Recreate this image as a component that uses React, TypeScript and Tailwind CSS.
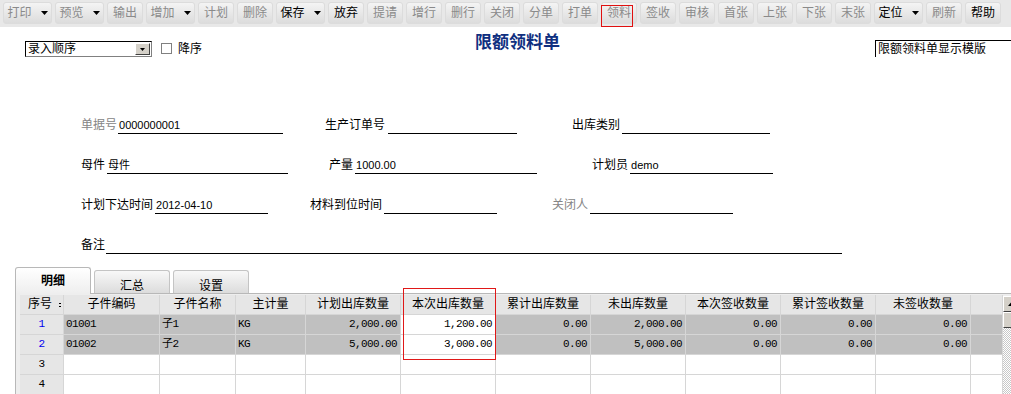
import React from "react";

type Tool = { label: string; drop?: boolean; on?: boolean; mark?: boolean };

const tools: Tool[] = [
  { label: "打印", drop: true },
  { label: "预览", drop: true },
  { label: "输出" },
  { label: "增加", drop: true },
  { label: "计划" },
  { label: "删除" },
  { label: "保存", drop: true, on: true },
  { label: "放弃", on: true },
  { label: "提请" },
  { label: "增行" },
  { label: "删行" },
  { label: "关闭" },
  { label: "分单" },
  { label: "打单" },
  { label: "领料", mark: true },
  { label: "签收" },
  { label: "审核" },
  { label: "首张" },
  { label: "上张" },
  { label: "下张" },
  { label: "末张" },
  { label: "定位", drop: true, on: true },
  { label: "刷新" },
  { label: "帮助", on: true },
];

const Tri = () => (
  <svg width="7" height="4" viewBox="0 0 7 4">
    <polygon points="0,0 7,0 3.5,4" fill="#000" />
  </svg>
);

const Toolbar = () => (
  <div className="flex h-[27px] gap-[3px] bg-[#e8e8e8] pl-[3px] pt-[2px]">
    {tools.map((t) => (
      <div
        key={t.label}
        className={`relative flex h-[22px] shrink-0 items-center justify-center gap-[9px] rounded-[3px] border border-[#dcdcdc] bg-linear-to-b from-[#f4f4f4] to-[#dcdcdc] text-[12px] leading-none ${
          t.drop ? "w-[49px]" : "w-[36px]"
        } ${t.on ? "text-black" : "text-[#8a8a8a]"}`}
      >
        <span>{t.label}</span>
        {t.drop && <Tri />}
        {t.mark && (
          <span className="absolute left-[-1px] top-[2px] h-[22px] w-[32px] border border-[#e01010]" />
        )}
      </div>
    ))}
  </div>
);

type F = { label: string; ml: string; gap: string; w: string; value?: string; gray?: boolean };

const rows: F[][] = [
  [
    { label: "单据号", ml: "ml-0", gap: "ml-[1px]", w: "w-[165px]", value: "0000000001", gray: true },
    { label: "生产订单号", ml: "ml-[42px]", gap: "ml-[3px]", w: "w-[129px]" },
    { label: "出库类别", ml: "ml-[55px]", gap: "ml-[2px]", w: "w-[148px]" },
  ],
  [
    { label: "母件", ml: "ml-0", gap: "ml-[2px]", w: "w-[181px]", value: "母件" },
    { label: "产量", ml: "ml-[41px]", gap: "ml-[2px]", w: "w-[182px]", value: "1000.00" },
    { label: "计划员", ml: "ml-[55px]", gap: "ml-[2px]", w: "w-[143px]", value: "demo" },
  ],
  [
    { label: "计划下达时间", ml: "ml-0", gap: "ml-[2px]", w: "w-[113px]", value: "2012-04-10" },
    { label: "材料到位时间", ml: "ml-[42px]", gap: "ml-[2px]", w: "w-[113px]" },
    { label: "关闭人", ml: "ml-[55px]", gap: "ml-[2px]", w: "w-[143px]", gray: true },
  ],
  [{ label: "备注", ml: "ml-0", gap: "ml-[1px]", w: "w-[736px]" }],
];

const Form = () => (
  <div>
    {rows.map((r, i) => (
      <div key={i} className="flex h-[40px] items-end pl-[81px]">
        {r.map((f) => (
          <div key={f.label} className={`flex items-end ${f.ml}`}>
            <span className={`pb-[2px] text-[12px] leading-[14px] ${f.gray ? "text-[#858585]" : "text-black"}`}>
              {f.label}
            </span>
            <div className={`${f.gap} ${f.w} h-[16px] border-b border-black pl-[1px] text-[11px] leading-[14px]`}>
              {f.value}
            </div>
          </div>
        ))}
      </div>
    ))}
  </div>
);

type Col = { title: string; w: string; num?: boolean; white?: boolean };

const cols: Col[] = [
  { title: "子件编码", w: "w-[96px]" },
  { title: "子件名称", w: "w-[76px]" },
  { title: "主计量", w: "w-[70px]" },
  { title: "计划出库数量", w: "w-[95px]", num: true },
  { title: "本次出库数量", w: "w-[95px]", num: true, white: true },
  { title: "累计出库数量", w: "w-[95px]", num: true },
  { title: "未出库数量", w: "w-[95px]", num: true },
  { title: "本次签收数量", w: "w-[95px]", num: true },
  { title: "累计签收数量", w: "w-[95px]", num: true },
  { title: "未签收数量", w: "w-[95px]", num: true },
];

const data: string[][] = [
  ["01001", "子1", "KG", "2,000.00", "1,200.00", "0.00", "2,000.00", "0.00", "0.00", "0.00"],
  ["01002", "子2", "KG", "5,000.00", "3,000.00", "0.00", "5,000.00", "0.00", "0.00", "0.00"],
];

const cell = "h-[20px] shrink-0 overflow-hidden whitespace-nowrap border-b border-r border-[#d6d6d6]";
const mono = "font-['Liberation_Mono','Noto_Sans_CJK_SC',monospace] text-[11px] tracking-[-0.6px] leading-[19px]";

const Grid = () => (
  <div className="relative flex">
    <div className="flex flex-col">
      <div className="flex bg-[#e6e6e6] text-[12px] leading-[19px]">
        <div className={`${cell} flex w-[44px] items-center justify-between pl-[8px] pr-[2px]`}>
          <span>序号</span>
          <span className="flex flex-col gap-[2px]">
            <span className="h-[1px] w-[2px] bg-black" />
            <span className="h-[1px] w-[2px] bg-black" />
          </span>
        </div>
        {cols.map((c) => (
          <div key={c.title} className={`${cell} ${c.w} text-center`}>
            {c.title}
          </div>
        ))}
        <div className={`${cell} w-[32px]`} />
      </div>
      {[0, 1, 2, 3].map((i) => {
        const row = data[i];
        return (
          <div key={i} className="flex">
            <div
              className={`${cell} ${mono} w-[44px] bg-[#e6e6e6] text-center ${row ? "text-[#0000ee]" : "text-black"}`}
            >
              {i + 1}
            </div>
            {cols.map((c, j) => (
              <div
                key={c.title}
                className={`${cell} ${mono} ${c.w} ${c.num ? "pr-[3px] text-right" : "pl-[2px] text-left"} ${
                  row ? (c.white ? "bg-white" : "bg-[#c0c0c0]") : "bg-white"
                }`}
              >
                {row ? row[j] : ""}
              </div>
            ))}
            <div className={`${cell} w-[32px] ${row ? "bg-[#c0c0c0]" : "bg-white"}`} />
          </div>
        );
      })}
    </div>
    <div className="flex w-[16px] shrink-0 flex-col pt-[1px]">
      <div className="flex h-[16px] items-center justify-center border border-b-[#404040] border-l-white border-r-[#404040] border-t-white bg-[#d4d0c8]">
        <svg width="7" height="4" viewBox="0 0 7 4">
          <polygon points="0,4 7,4 3.5,0" fill="#000" />
        </svg>
      </div>
      <div className="h-[16px] border border-b-[#404040] border-l-white border-r-[#404040] border-t-white bg-[#d4d0c8]" />
      <div className="h-[70px] bg-[repeating-conic-gradient(#c8c8c8_0%_25%,#ffffff_0%_50%)] bg-size-[2px_2px]" />
    </div>
    <span className="absolute left-[383px] top-[-7px] h-[72px] w-[93px] border border-[#e01818]" />
  </div>
);

export default function App() {
  return (
    <div className="h-[394px] w-[1011px] overflow-hidden bg-white font-['Liberation_Sans','Noto_Sans_CJK_SC',sans-serif] text-black">
      <Toolbar />
      <div className="flex h-[67px]">
        <div className="ml-[25px] mt-[14px] flex h-[16px] shrink-0 items-start">
          <div className="flex h-[16px] w-[127px] items-center justify-between border border-b-[#808080] border-l-black border-r-[#808080] border-t-black bg-white pl-[2px] pr-[1px]">
            <span className="text-[12px] leading-none">录入顺序</span>
            <span className="flex h-[12px] w-[15px] items-center justify-center border border-b-[#404040] border-l-white border-r-[#404040] border-t-white bg-[#d4d0c8]">
              <svg width="5" height="3" viewBox="0 0 5 3">
                <polygon points="0,0 5,0 2.5,3" fill="#000" />
              </svg>
            </span>
          </div>
          <span className="ml-[9px] mt-[2px] h-[11px] w-[11px] border border-[#808080] bg-white" />
          <span className="ml-[6px] text-[12px] leading-[16px]">降序</span>
        </div>
        <div className="ml-[273px] mt-[6px] shrink-0 text-[17px] font-bold leading-[20px] text-[#0f2f7f]">限额领料单</div>
        <div className="ml-[315px] mt-[13px] flex h-[17px] w-[140px] shrink-0 items-center border-l border-t border-black bg-white pl-[2px] text-[12px] leading-none">
          限额领料单显示模版
        </div>
      </div>
      <Form />
      <div className="mt-[13px] flex h-[26px] items-end pl-[15px] text-[12px] leading-none">
        <div className="relative z-10 -mb-px flex h-[27px] w-[76px] justify-center rounded-t-[3px] border border-b-0 border-[#b8b8b8] bg-linear-to-b from-white to-[#eeeeee] pt-[7px] font-bold">
          明细
        </div>
        <div className="ml-[3px] flex h-[23px] w-[76px] justify-center rounded-t-[3px] border border-b-0 border-[#c4c4c4] bg-linear-to-b from-[#f8f8f8] to-[#dcdcdc] pt-[9px]">
          汇总
        </div>
        <div className="ml-[3px] flex h-[23px] w-[76px] justify-center rounded-t-[3px] border border-b-0 border-[#c4c4c4] bg-linear-to-b from-[#f8f8f8] to-[#dcdcdc] pt-[9px]">
          设置
        </div>
      </div>
      <div className="ml-[15px] border-l border-t border-[#b8b8b8] bg-[#eeeeee] pl-[4px] pt-[1px]">
        <Grid />
      </div>
    </div>
  );
}
